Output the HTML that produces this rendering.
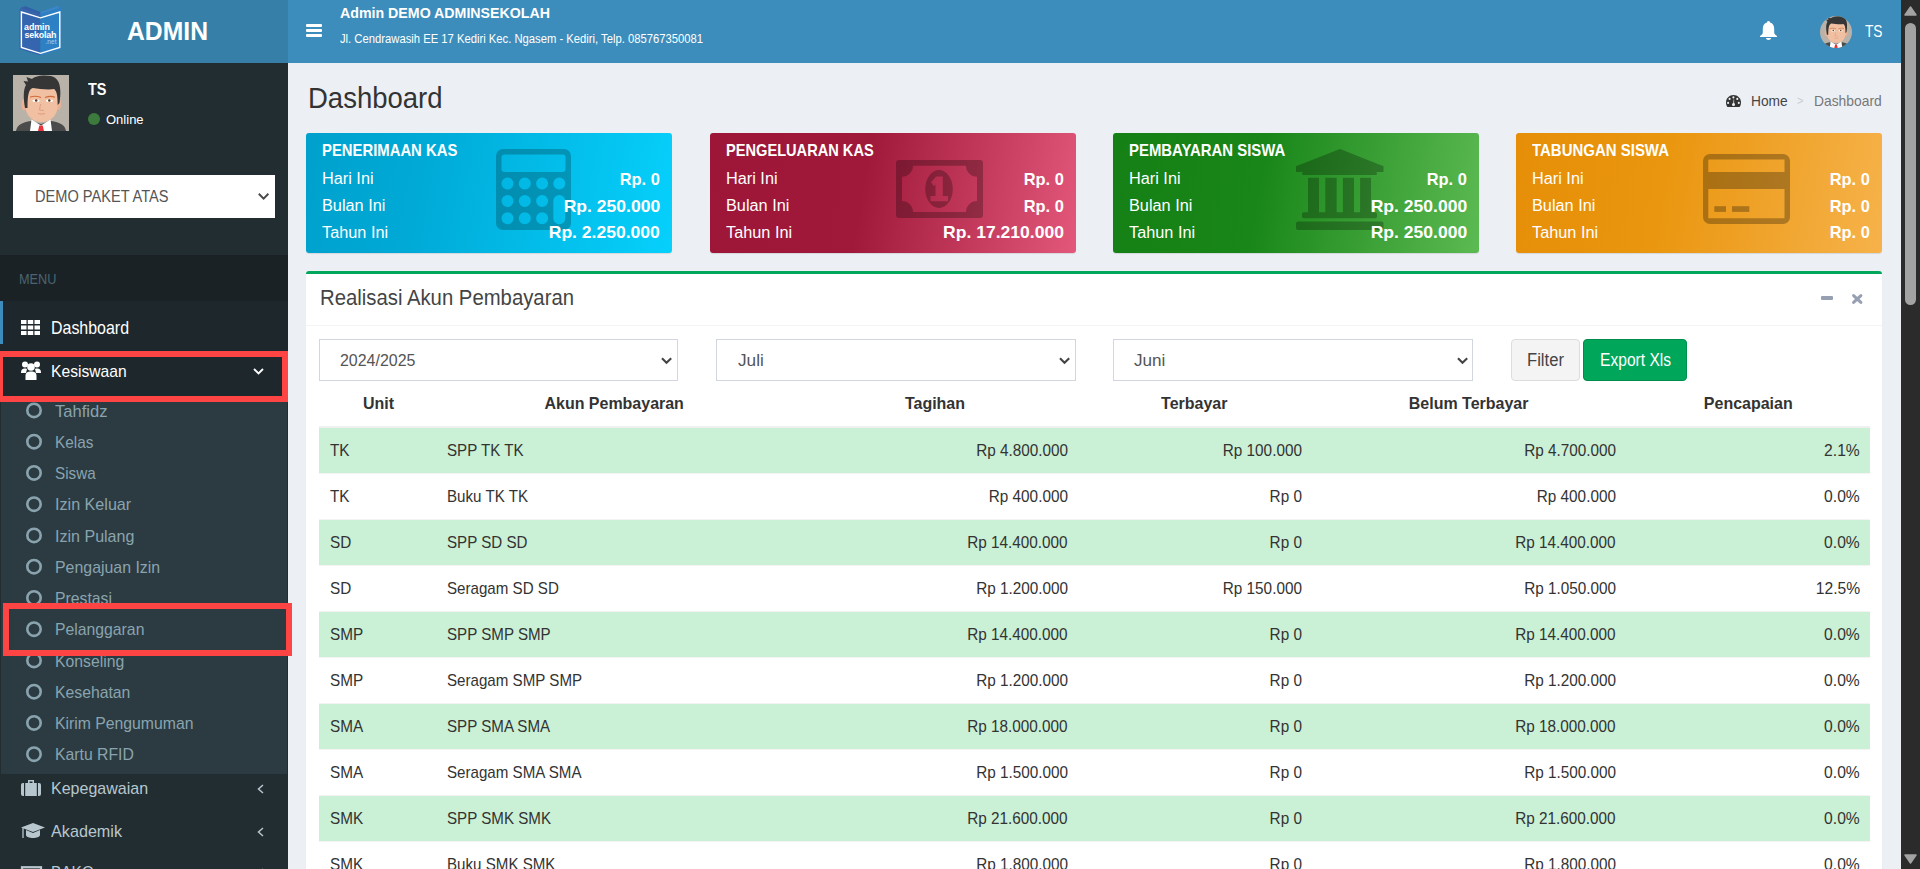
<!DOCTYPE html>
<html><head><meta charset="utf-8"><title>Dashboard</title>
<style>
html,body{margin:0;padding:0;width:1920px;height:869px;overflow:hidden;background:#ecf0f5;font-family:"Liberation Sans",sans-serif;}
.a{position:absolute;box-sizing:border-box;}
.t{position:absolute;white-space:nowrap;line-height:1;font-family:"Liberation Sans",sans-serif;}
svg{position:absolute;overflow:visible;}
</style></head><body>
<!-- header -->
<div class="a" style="left:0;top:0;width:288px;height:63px;background:#367fa9"></div>
<div class="a" style="left:288px;top:0;width:1613px;height:63px;background:#3c8dbc"></div>
<!-- logo -->
<svg style="left:19px;top:6px" width="44" height="51" viewBox="0 0 44 51">
  <path d="M3 0.5 L21.5 7.5 L21.5 10 L1 3 Z" fill="#3a62a8"/>
  <path d="M6 0 L21.5 6 L21.5 8 L4 2 Z" fill="#3060a8"/>
  <path d="M41.5 0.5 L21.5 7.5 L21.5 10 L42.5 3 Z" fill="#2f7dc2"/>
  <path d="M38.5 0 L21.5 6 L21.5 8 L40.5 2 Z" fill="#3a86c8"/>
  <path d="M0.5 3.1 L21.5 9.2 L21.5 49.5 L0.5 43 Z" fill="#3465ae"/>
  <path d="M42.7 3.1 L21.5 9.2 L21.5 49.5 L42.7 43 Z" fill="#2e80c4"/>
  <path d="M2.4 6 L21.5 11.8 L40.8 6 L40.8 41.5 L21.5 47.3 L2.4 41.5 Z" fill="none" stroke="#fff" stroke-width="1.4" stroke-linejoin="miter"/>
  <text x="5.1" y="23.7" font-family="Liberation Sans" font-weight="700" font-size="8.9" fill="#fff" letter-spacing="-0.1">admin</text>
  <text x="5.5" y="32.1" font-family="Liberation Sans" font-weight="700" font-size="8.9" fill="#fff" letter-spacing="-0.2">sekolah</text>
  <text x="26.5" y="38.2" font-family="Liberation Sans" font-size="6.6" fill="#9ad2f5">.net</text>
</svg>
<!-- hamburger -->
<div class="a" style="left:306px;top:24px;width:16px;height:3px;background:#fff;border-radius:1px"></div>
<div class="a" style="left:306px;top:29px;width:16px;height:3px;background:#fff;border-radius:1px"></div>
<div class="a" style="left:306px;top:34px;width:16px;height:3px;background:#fff;border-radius:1px"></div>
<!-- bell -->
<svg style="left:1760px;top:21px" width="17" height="19" viewBox="0 0 17 19">
  <path d="M8.5 0 C9.6 0 10 .8 10 1.6 C12.8 2.3 14.2 4.6 14.2 8 L14.2 11.5 C14.2 13 15.5 14 17 15 L17 16 L0 16 L0 15 C1.5 14 2.8 13 2.8 11.5 L2.8 8 C2.8 4.6 4.2 2.3 7 1.6 C7 .8 7.4 0 8.5 0 Z" fill="#fff"/>
  <path d="M6 17 L11 17 C11 18.3 9.9 19 8.5 19 C7.1 19 6 18.3 6 17 Z" fill="#fff"/>
</svg>
<!-- header avatar -->
<svg style="left:1820px;top:16px" width="32" height="32" viewBox="0 0 56 56">
  <defs><clipPath id="hc"><circle cx="28" cy="28" r="28"/></clipPath></defs>
  <g clip-path="url(#hc)"><use href="#face" width="56" height="56"/></g>
</svg>
<!-- sidebar -->
<div class="a" style="left:0;top:63px;width:288px;height:806px;background:#222d32"></div>
<!-- user avatar -->
<svg style="left:12.9px;top:74.9px" width="56" height="56" viewBox="0 0 56 56">
  <symbol id="face" viewBox="0 0 56 56">
  <rect width="56" height="56" fill="#b8b2a8"/>
  <path d="M3 56 C4 50 9 47.5 18 46 L28 49 L38 46 C47 47.5 52 50 53 56 Z" fill="#4b4b4b"/>
  <path d="M18.5 44.5 L28 50.5 L37.5 44.5 L39 56 L17 56 Z" fill="#fff"/>
  <path d="M26.3 50.5 L29.7 50.5 L31 56 L25 56 Z" fill="#e8343a"/>
  <ellipse cx="11" cy="29.5" rx="2.6" ry="6" fill="#eab294"/>
  <ellipse cx="45.5" cy="29" rx="2.6" ry="6" fill="#eab294"/>
  <path d="M12.5 22 C12.5 13 17 10 28.5 10 C40 10 44.6 13 44.6 22 L44.6 31 C44.6 41 37 47 28.5 47 C20 47 12.5 41 12.5 31 Z" fill="#f1c0a2"/>
  <path d="M12 33 C10 22 10.5 14 13 10 L10.5 6 L15 6.5 L13.5 2 L19 4 C22 1 30 -0.5 38 1 C46 3 49 10 46.5 28 L44.6 30 C44.8 22 44 16 41 14 C36 15 26 14 20 13 C16 14 14.5 19 14.5 33 Z" fill="#363636"/>
  <path d="M17 22.2 C20 21 24 21 28 22.5" fill="none" stroke="#d06a3a" stroke-width="1.1"/>
  <path d="M32 22.5 C36 21 39 21 42 22.2" fill="none" stroke="#d06a3a" stroke-width="1.1"/>
  <ellipse cx="23" cy="25.8" rx="3.6" ry="1.3" fill="#fff"/><circle cx="23.2" cy="25.5" r="1.3" fill="#5b3a22"/>
  <ellipse cx="36.5" cy="25.8" rx="3.6" ry="1.3" fill="#fff"/><circle cx="36.3" cy="25.5" r="1.3" fill="#5b3a22"/>
  <path d="M27.5 29 L26.5 35 L31 35.5" fill="none" stroke="#d9957a" stroke-width="0.8"/>
  <path d="M25 38.5 C27 39.2 30 39.2 32 38.5" fill="none" stroke="#d9957a" stroke-width="0.9"/>
  </symbol>
  <use href="#face" width="56" height="56"/>
</svg>
<div class="a" style="left:87.5px;top:113px;width:12px;height:12px;border-radius:50%;background:#3d7a3d"></div>
<!-- company select -->
<div class="a" style="left:13px;top:175px;width:262px;height:43px;background:#fff"></div>
<svg style="left:258.3px;top:193px" width="11.2" height="7.2" viewBox="0 0 11.2 7.2"><path d="M0.8 0.8 L5.6 5.6 L10.4 0.8" fill="none" stroke="#4a4a4a" stroke-width="2"/></svg>
<!-- MENU header -->
<div class="a" style="left:0;top:255px;width:288px;height:46px;background:#1a2226"></div>
<!-- Dashboard active -->
<div class="a" style="left:0;top:301px;width:288px;height:43px;background:#1e282c;border-left:3px solid #3c8dbc"></div>
<svg style="left:21px;top:319.5px" width="19" height="15" viewBox="0 0 19 15">
  <g fill="#fff">
  <rect x="0" y="0" width="5.5" height="4"/><rect x="6.75" y="0" width="5.5" height="4"/><rect x="13.5" y="0" width="5.5" height="4"/>
  <rect x="0" y="5.5" width="5.5" height="4"/><rect x="6.75" y="5.5" width="5.5" height="4"/><rect x="13.5" y="5.5" width="5.5" height="4"/>
  <rect x="0" y="11" width="5.5" height="4"/><rect x="6.75" y="11" width="5.5" height="4"/><rect x="13.5" y="11" width="5.5" height="4"/>
  </g>
</svg>
<!-- Kesiswaan -->
<div class="a" style="left:0;top:344px;width:288px;height:52px;background:#1e282c"></div>
<svg style="left:21px;top:361px" width="20" height="19" viewBox="0 0 20 19">
  <g fill="#fff">
  <circle cx="4" cy="3.5" r="3"/><circle cx="16" cy="3.5" r="3"/>
  <path d="M0 12 C0 8.5 1.5 7.5 4 7.5 C5.5 7.5 6 8 6 8 L5 12 Z"/>
  <path d="M20 12 C20 8.5 18.5 7.5 16 7.5 C14.5 7.5 14 8 14 8 L15 12 Z"/>
  <circle cx="10" cy="6" r="3.8"/>
  <path d="M4.5 19 L4.5 15 C4.5 11.5 6.5 10.5 10 10.5 C13.5 10.5 15.5 11.5 15.5 15 L15.5 19 Z"/>
  </g>
</svg>
<svg style="left:253px;top:368px" width="11" height="7" viewBox="0 0 11 7"><path d="M1 1 L5.5 5.5 L10 1" fill="none" stroke="#fff" stroke-width="1.8"/></svg>
<!-- treeview -->
<div class="a" style="left:1px;top:396px;width:286px;height:378px;background:#2c3b41"></div>
<svg style="left:0;top:0" width="60" height="869" viewBox="0 0 60 869">
  <g fill="none" stroke="#8aa4af" stroke-width="2.6">
  <circle cx="34" cy="410.4" r="6.7"/><circle cx="34" cy="441.65" r="6.7"/><circle cx="34" cy="472.9" r="6.7"/>
  <circle cx="34" cy="504.15" r="6.7"/><circle cx="34" cy="535.4" r="6.7"/><circle cx="34" cy="566.65" r="6.7"/>
  <circle cx="34" cy="597.9" r="6.7"/><circle cx="34" cy="629.15" r="6.7"/><circle cx="34" cy="660.4" r="6.7"/>
  <circle cx="34" cy="691.65" r="6.7"/><circle cx="34" cy="722.9" r="6.7"/><circle cx="34" cy="754.15" r="6.7"/>
  </g>
</svg>
<!-- Kepegawaian icon briefcase -->
<svg style="left:21px;top:779.5px" width="20" height="16" viewBox="0 0 20 16">
  <path d="M7 0 L13 0 L13 3 L11.5 3 L11.5 1.5 L8.5 1.5 L8.5 3 L7 3 Z" fill="#b8c7ce"/>
  <rect x="0" y="3" width="20" height="13" rx="2" fill="#b8c7ce"/>
  <rect x="3" y="3" width="1.2" height="13" fill="#222d32"/><rect x="15.8" y="3" width="1.2" height="13" fill="#222d32"/>
</svg>
<svg style="left:257px;top:784px" width="7" height="10" viewBox="0 0 7 10"><path d="M6 1 L1.5 5 L6 9" fill="none" stroke="#b8c7ce" stroke-width="1.5"/></svg>
<!-- Akademik icon -->
<svg style="left:21px;top:823px" width="24" height="16" viewBox="0 0 24 16">
  <path d="M12 0 L24 4.5 L12 9 L0 4.5 Z" fill="#b8c7ce"/>
  <path d="M5 7 L5 12 C5 14 8.5 15 12 15 C15.5 15 19 14 19 12 L19 7 L12 10 Z" fill="#b8c7ce"/>
  <path d="M2 5 L2 15" stroke="#b8c7ce" stroke-width="1.3"/>
</svg>
<svg style="left:257px;top:826.5px" width="7" height="10" viewBox="0 0 7 10"><path d="M6 1 L1.5 5 L6 9" fill="none" stroke="#b8c7ce" stroke-width="1.5"/></svg>
<svg style="left:21.5px;top:867px" width="19" height="10" viewBox="0 0 20 10"><rect x="0" y="0" width="20" height="10" fill="none" stroke="#b8c7ce" stroke-width="2.4"/></svg>
<svg style="left:257px;top:868px" width="7" height="10" viewBox="0 0 7 10"><path d="M6 1 L1.5 5 L6 9" fill="none" stroke="#b8c7ce" stroke-width="1.5"/></svg>
<!-- red highlight boxes -->
<div class="a" style="left:-3px;top:351px;width:291px;height:51px;border:6px solid #ff4444;z-index:5"></div>
<div class="a" style="left:3px;top:603px;width:289px;height:53px;border:6px solid #ff4444;z-index:5"></div>
<!-- breadcrumb gauge icon -->
<svg style="left:1726px;top:95px" width="15" height="12" viewBox="0 0 15 12">
  <path d="M7.5 0 C3.4 0 0 3.3 0 7.4 C0 9 .5 10.6 1.4 12 L13.6 12 C14.5 10.6 15 9 15 7.4 C15 3.3 11.6 0 7.5 0 Z" fill="#333"/>
  <g fill="#ecf0f5"><circle cx="7.4" cy="2.4" r="1.05"/><circle cx="3.6" cy="3.9" r="1.05"/><circle cx="11.3" cy="3.9" r="1.05"/><circle cx="2.1" cy="7.9" r="1.05"/><circle cx="12.8" cy="7.9" r="1.05"/>
  <path d="M7.1 9.3 L7.7 4.3 L8.1 4.3 L8.1 9.3 Z"/><circle cx="7.5" cy="9.6" r="1.5"/></g>
</svg>
<!-- info boxes -->
<div class="a" style="left:306px;top:133px;width:366px;height:120px;border-radius:3px;background:linear-gradient(100deg,#00a1cc 0%,#00a9d6 30%,#06d0fc 100%);box-shadow:0 1px 1px rgba(0,0,0,.1)"></div>
<div class="a" style="left:710px;top:133px;width:366px;height:120px;border-radius:3px;background:linear-gradient(100deg,#9d1637 0%,#a0193b 42%,#e3587a 100%);box-shadow:0 1px 1px rgba(0,0,0,.1)"></div>
<div class="a" style="left:1113px;top:133px;width:366px;height:120px;border-radius:3px;background:linear-gradient(100deg,#158015 0%,#198619 40%,#5cba52 100%);box-shadow:0 1px 1px rgba(0,0,0,.1)"></div>
<div class="a" style="left:1516px;top:133px;width:366px;height:120px;border-radius:3px;background:linear-gradient(100deg,#e68e08 0%,#ea960f 40%,#f6b24a 100%);box-shadow:0 1px 1px rgba(0,0,0,.1)"></div>
<!-- calculator -->
<svg style="left:495.5px;top:148.6px" width="75" height="81" viewBox="0 0 75 81">
  <path fill="rgba(0,0,0,0.22)" fill-rule="evenodd" d="M7 0 H68 A7 7 0 0 1 75 7 V74 A7 7 0 0 1 68 81 H7 A7 7 0 0 1 0 74 V7 A7 7 0 0 1 7 0 Z
   M8.5 5.4 H66.5 A3 3 0 0 1 69.5 8.4 V20 A3 3 0 0 1 66.5 23 H8.5 A3 3 0 0 1 5.5 20 V8.4 A3 3 0 0 1 8.5 5.4 Z
   M5.5 34.6 a6 6 0 1 0 12 0 a6 6 0 1 0 -12 0 Z M22.8 34.6 a6 6 0 1 0 12 0 a6 6 0 1 0 -12 0 Z M40.1 34.6 a6 6 0 1 0 12 0 a6 6 0 1 0 -12 0 Z M57.3 34.6 a6 6 0 1 0 12 0 a6 6 0 1 0 -12 0 Z
   M5.5 52 a6 6 0 1 0 12 0 a6 6 0 1 0 -12 0 Z M22.8 52 a6 6 0 1 0 12 0 a6 6 0 1 0 -12 0 Z M40.1 52 a6 6 0 1 0 12 0 a6 6 0 1 0 -12 0 Z
   M5.5 69.3 a6 6 0 1 0 12 0 a6 6 0 1 0 -12 0 Z M22.8 69.3 a6 6 0 1 0 12 0 a6 6 0 1 0 -12 0 Z M40.1 69.3 a6 6 0 1 0 12 0 a6 6 0 1 0 -12 0 Z
   M57.3 52 A6 6 0 0 1 69.3 52 V69.3 A6 6 0 0 1 57.3 69.3 Z"/>
</svg>
<!-- money -->
<svg style="left:896px;top:160px" width="87" height="58" viewBox="0 0 87 58">
  <path fill="rgba(0,0,0,0.26)" fill-rule="evenodd" d="M3 0 H84 A3 3 0 0 1 87 3 V55 A3 3 0 0 1 84 58 H3 A3 3 0 0 1 0 55 V3 A3 3 0 0 1 3 0 Z
   M17 5.8 H70 A11 11 0 0 0 81 16.8 V41 A11 11 0 0 0 70 52 H17 A11 11 0 0 0 6 41 V16.8 A11 11 0 0 0 17 5.8 Z"/>
  <path fill="rgba(0,0,0,0.26)" fill-rule="evenodd" d="M29.2 29 A13.8 18.9 0 1 0 56.8 29 A13.8 18.9 0 1 0 29.2 29 Z
   M40.2 16.5 L46.8 16.5 L46.8 36 L52 36 L52 41.2 L34.5 41.2 L34.5 36 L39.5 36 L39.5 24.5 L38 26.2 L35 22.2 Z"/>
</svg>
<!-- bank -->
<svg style="left:1296px;top:148.6px" width="88" height="81" viewBox="0 0 88 81">
  <g fill="rgba(0,0,0,0.26)">
  <path d="M44 0 L87.5 17.3 V23 H0 V17.3 Z"/>
  <rect x="6" y="23" width="75" height="3" rx="1.5"/>
  <rect x="12" y="28.8" width="11" height="34.5"/><rect x="29.3" y="28.8" width="11.3" height="34.5"/>
  <rect x="46.9" y="28.8" width="11.1" height="34.5"/><rect x="64.1" y="28.8" width="10.9" height="34.5"/>
  <rect x="6" y="63.3" width="75" height="6" rx="2"/>
  <rect x="0" y="72.4" width="87.5" height="8.5" rx="2"/>
  </g>
</svg>
<!-- card -->
<svg style="left:1702.7px;top:154px" width="87" height="70" viewBox="0 0 87 70">
  <g fill="rgba(0,0,0,0.28)">
  <path fill-rule="evenodd" d="M7 0 H80 A7 7 0 0 1 87 7 V63 A7 7 0 0 1 80 70 H7 A7 7 0 0 1 0 63 V7 A7 7 0 0 1 7 0 Z M5.3 5.5 V18 H81.5 V5.5 Z M5.3 34.9 V64.3 H81.5 V34.9 Z"/>
  <rect x="11.3" y="52.2" width="11.7" height="5.7"/><rect x="29" y="52.2" width="17.3" height="5.7"/>
  </g>
</svg>
<!-- main box -->
<div class="a" style="left:306px;top:271px;width:1576px;height:640px;background:#fff;border-top:3px solid #00a65a;border-radius:3px;box-shadow:0 1px 1px rgba(0,0,0,.1)"></div>
<div class="a" style="left:306px;top:325px;width:1576px;height:1px;background:#f4f4f4"></div>
<div class="a" style="left:1821px;top:296.2px;width:12px;height:3.6px;background:#97a0b3;border-radius:1px"></div>
<svg style="left:1851.5px;top:294px" width="10.5" height="10" viewBox="0 0 10.5 10"><path d="M1.6 1.6 L8.9 8.4 M8.9 1.6 L1.6 8.4" stroke="#97a0b3" stroke-width="3" stroke-linecap="round"/></svg>
<!-- selects -->
<div class="a" style="left:319px;top:339px;width:359px;height:42px;border:1px solid #d2d6de;background:#fff"></div>
<div class="a" style="left:716px;top:339px;width:360px;height:42px;border:1px solid #d2d6de;background:#fff"></div>
<div class="a" style="left:1113px;top:339px;width:360px;height:42px;border:1px solid #d2d6de;background:#fff"></div>
<svg style="left:661px;top:357px" width="11" height="8" viewBox="0 0 11 8"><path d="M1 1.2 L5.5 5.8 L10.2 1.2" fill="none" stroke="#444" stroke-width="2.1"/></svg>
<svg style="left:1059px;top:357px" width="11" height="8" viewBox="0 0 11 8"><path d="M1 1.2 L5.5 5.8 L10.2 1.2" fill="none" stroke="#444" stroke-width="2.1"/></svg>
<svg style="left:1456.5px;top:357px" width="11" height="8" viewBox="0 0 11 8"><path d="M1 1.2 L5.5 5.8 L10.2 1.2" fill="none" stroke="#444" stroke-width="2.1"/></svg>
<!-- buttons -->
<div class="a" style="left:1510.5px;top:339px;width:69px;height:42px;border:1px solid #ddd;background:#f4f4f4;border-radius:4px"></div>
<div class="a" style="left:1583px;top:339px;width:104px;height:42px;border:1px solid #008d4c;background:#00a65a;border-radius:4px"></div>
<!-- table -->
<div class="a" style="left:319px;top:426px;width:1551px;height:2px;background:#f0f0f0"></div>
<div class="a" style="left:319px;top:473px;width:1551px;height:1px;background:#f4f4f4"></div>
<div class="a" style="left:319px;top:519px;width:1551px;height:1px;background:#f4f4f4"></div>
<div class="a" style="left:319px;top:565px;width:1551px;height:1px;background:#f4f4f4"></div>
<div class="a" style="left:319px;top:611px;width:1551px;height:1px;background:#f4f4f4"></div>
<div class="a" style="left:319px;top:657px;width:1551px;height:1px;background:#f4f4f4"></div>
<div class="a" style="left:319px;top:703px;width:1551px;height:1px;background:#f4f4f4"></div>
<div class="a" style="left:319px;top:749px;width:1551px;height:1px;background:#f4f4f4"></div>
<div class="a" style="left:319px;top:795px;width:1551px;height:1px;background:#f4f4f4"></div>
<div class="a" style="left:319px;top:841px;width:1551px;height:1px;background:#f4f4f4"></div>
<div class="a" style="left:319px;top:428px;width:1551px;height:45px;background:#caf0d5"></div>
<div class="a" style="left:319px;top:520px;width:1551px;height:45px;background:#caf0d5"></div>
<div class="a" style="left:319px;top:612px;width:1551px;height:45px;background:#caf0d5"></div>
<div class="a" style="left:319px;top:704px;width:1551px;height:45px;background:#caf0d5"></div>
<div class="a" style="left:319px;top:796px;width:1551px;height:45px;background:#caf0d5"></div>
<!-- scrollbar -->
<div class="a" style="left:1901px;top:0;width:19px;height:869px;background:#2b2b2b"></div>
<svg style="left:1904px;top:5px" width="13" height="11" viewBox="0 0 13 11"><path d="M6.5 2 L12 10 L1 10 Z" fill="#a3a3a3" stroke="#a3a3a3" stroke-width="1.5" stroke-linejoin="round"/></svg>
<div class="a" style="left:1905px;top:23px;width:11px;height:282px;background:#a3a3a3;border-radius:5.5px"></div>
<svg style="left:1904px;top:854px" width="13" height="10" viewBox="0 0 13 10"><path d="M1 1 L12 1 L6.5 9 Z" fill="#a3a3a3" stroke="#a3a3a3" stroke-width="1.5" stroke-linejoin="round"/></svg>

<div class="t" style="top:17.97px;font-size:26px;font-weight:700;color:#fff;left:127.30px;transform-origin:0 0;transform:scaleX(0.9505);">ADMIN</div>
<div class="t" style="top:5.27px;font-size:15px;font-weight:700;color:#fff;left:340.00px;transform-origin:0 0;transform:scaleX(0.9461);">Admin DEMO ADMINSEKOLAH</div>
<div class="t" style="top:32.48px;font-size:13px;font-weight:400;color:#fff;left:340.00px;transform-origin:0 0;transform:scaleX(0.8651);">Jl. Cendrawasih EE 17 Kediri Kec. Ngasem - Kediri, Telp. 085767350081</div>
<div class="t" style="top:23.16px;font-size:17px;font-weight:400;color:#fff;left:1864.80px;transform-origin:0 0;transform:scaleX(0.8052);">TS</div>
<div class="t" style="top:81.36px;font-size:17px;font-weight:700;color:#fff;left:87.50px;transform-origin:0 0;transform:scaleX(0.8512);">TS</div>
<div class="t" style="top:113.09px;font-size:13.6px;font-weight:400;color:#fff;left:106.00px;transform-origin:0 0;transform:scaleX(0.9568);">Online</div>
<div class="t" style="top:188.30px;font-size:17.4px;font-weight:400;color:#555;left:34.50px;transform-origin:0 0;transform:scaleX(0.8389);">DEMO PAKET ATAS</div>
<div class="t" style="top:271.75px;font-size:14.5px;font-weight:400;color:#4b646f;left:19.00px;transform-origin:0 0;transform:scaleX(0.8758);">MENU</div>
<div class="t" style="top:319.74px;font-size:17.8px;font-weight:400;color:#fff;left:51.00px;transform-origin:0 0;transform:scaleX(0.8966);">Dashboard</div>
<div class="t" style="top:362.87px;font-size:17px;font-weight:400;color:#fff;left:51.00px;transform-origin:0 0;transform:scaleX(0.9200);">Kesiswaan</div>
<div class="t" style="top:403.63px;font-size:16.6px;font-weight:400;color:#8aa4af;left:55.30px;transform-origin:0 0;transform:scaleX(0.9966);">Tahfidz</div>
<div class="t" style="top:434.88px;font-size:16.6px;font-weight:400;color:#8aa4af;left:55.30px;transform-origin:0 0;transform:scaleX(0.9250);">Kelas</div>
<div class="t" style="top:466.13px;font-size:16.6px;font-weight:400;color:#8aa4af;left:55.30px;transform-origin:0 0;transform:scaleX(0.9172);">Siswa</div>
<div class="t" style="top:497.38px;font-size:16.6px;font-weight:400;color:#8aa4af;left:55.30px;transform-origin:0 0;transform:scaleX(0.9719);">Izin Keluar</div>
<div class="t" style="top:528.63px;font-size:16.6px;font-weight:400;color:#8aa4af;left:55.30px;transform-origin:0 0;transform:scaleX(0.9670);">Izin Pulang</div>
<div class="t" style="top:559.88px;font-size:16.6px;font-weight:400;color:#8aa4af;left:55.30px;transform-origin:0 0;transform:scaleX(0.9581);">Pengajuan Izin</div>
<div class="t" style="top:591.13px;font-size:16.6px;font-weight:400;color:#8aa4af;left:55.30px;transform-origin:0 0;transform:scaleX(0.9500);">Prestasi</div>
<div class="t" style="top:622.38px;font-size:16.6px;font-weight:400;color:#8aa4af;left:55.30px;transform-origin:0 0;transform:scaleX(0.9500);">Pelanggaran</div>
<div class="t" style="top:653.63px;font-size:16.6px;font-weight:400;color:#8aa4af;left:55.30px;transform-origin:0 0;transform:scaleX(0.9500);">Konseling</div>
<div class="t" style="top:684.88px;font-size:16.6px;font-weight:400;color:#8aa4af;left:55.30px;transform-origin:0 0;transform:scaleX(0.9500);">Kesehatan</div>
<div class="t" style="top:716.13px;font-size:16.6px;font-weight:400;color:#8aa4af;left:55.30px;transform-origin:0 0;transform:scaleX(0.9500);">Kirim Pengumuman</div>
<div class="t" style="top:747.38px;font-size:16.6px;font-weight:400;color:#8aa4af;left:55.30px;transform-origin:0 0;transform:scaleX(0.9500);">Kartu RFID</div>
<div class="t" style="top:781.33px;font-size:16.6px;font-weight:400;color:#b8c7ce;left:51.20px;transform-origin:0 0;transform:scaleX(0.9650);">Kepegawaian</div>
<div class="t" style="top:823.53px;font-size:16.6px;font-weight:400;color:#b8c7ce;left:51.20px;transform-origin:0 0;transform:scaleX(0.9750);">Akademik</div>
<div class="t" style="top:865.43px;font-size:16.6px;font-weight:400;color:#b8c7ce;left:51.40px;transform-origin:0 0;transform:scaleX(0.9300);">BAKQ</div>
<div class="t" style="top:83.50px;font-size:29px;font-weight:400;color:#333;left:307.60px;transform-origin:0 0;transform:scaleX(0.9480);">Dashboard</div>
<div class="t" style="top:93.55px;font-size:14.5px;font-weight:400;color:#444;left:1750.80px;transform-origin:0 0;transform:scaleX(0.9486);">Home</div>
<div class="t" style="top:94.48px;font-size:13px;font-weight:400;color:#ccc;left:1796.70px;transform-origin:0 0;transform:scaleX(0.8500);">&gt;</div>
<div class="t" style="top:93.55px;font-size:14.5px;font-weight:400;color:#777;left:1814.00px;transform-origin:0 0;transform:scaleX(0.9544);">Dashboard</div>
<div class="t" style="top:143.41px;font-size:16.7px;font-weight:700;color:#fff;left:322.00px;transform-origin:0 0;transform:scaleX(0.8898);">PENERIMAAN KAS</div>
<div class="t" style="top:169.72px;font-size:17.3px;font-weight:400;color:#fff;left:322.00px;transform-origin:0 0;transform:scaleX(0.9420);">Hari Ini</div>
<div class="t" style="top:196.72px;font-size:17.3px;font-weight:400;color:#fff;left:322.00px;transform-origin:0 0;transform:scaleX(0.9420);">Bulan Ini</div>
<div class="t" style="top:223.72px;font-size:17.3px;font-weight:400;color:#fff;left:322.00px;transform-origin:0 0;transform:scaleX(0.9420);">Tahun Ini</div>
<div class="t" style="top:170.96px;font-size:16.4px;font-weight:700;color:#fff;left:619.72px;transform-origin:100% 0;">Rp. 0</div>
<div class="t" style="top:197.71px;font-size:16.4px;font-weight:700;color:#fff;left:569.58px;transform-origin:100% 0;transform:scaleX(1.0700);">Rp. 250.000</div>
<div class="t" style="top:224.46px;font-size:16.4px;font-weight:700;color:#fff;left:555.92px;transform-origin:100% 0;transform:scaleX(1.0700);">Rp. 2.250.000</div>
<div class="t" style="top:143.41px;font-size:16.7px;font-weight:700;color:#fff;left:726.00px;transform-origin:0 0;transform:scaleX(0.8753);">PENGELUARAN KAS</div>
<div class="t" style="top:169.72px;font-size:17.3px;font-weight:400;color:#fff;left:726.00px;transform-origin:0 0;transform:scaleX(0.9420);">Hari Ini</div>
<div class="t" style="top:196.72px;font-size:17.3px;font-weight:400;color:#fff;left:726.00px;transform-origin:0 0;transform:scaleX(0.9420);">Bulan Ini</div>
<div class="t" style="top:223.72px;font-size:17.3px;font-weight:400;color:#fff;left:726.00px;transform-origin:0 0;transform:scaleX(0.9420);">Tahun Ini</div>
<div class="t" style="top:170.96px;font-size:16.4px;font-weight:700;color:#fff;left:1023.72px;transform-origin:100% 0;">Rp. 0</div>
<div class="t" style="top:197.71px;font-size:16.4px;font-weight:700;color:#fff;left:1023.72px;transform-origin:100% 0;">Rp. 0</div>
<div class="t" style="top:224.46px;font-size:16.4px;font-weight:700;color:#fff;left:950.80px;transform-origin:100% 0;transform:scaleX(1.0700);">Rp. 17.210.000</div>
<div class="t" style="top:143.41px;font-size:16.7px;font-weight:700;color:#fff;left:1129.00px;transform-origin:0 0;transform:scaleX(0.8934);">PEMBAYARAN SISWA</div>
<div class="t" style="top:169.72px;font-size:17.3px;font-weight:400;color:#fff;left:1129.00px;transform-origin:0 0;transform:scaleX(0.9420);">Hari Ini</div>
<div class="t" style="top:196.72px;font-size:17.3px;font-weight:400;color:#fff;left:1129.00px;transform-origin:0 0;transform:scaleX(0.9420);">Bulan Ini</div>
<div class="t" style="top:223.72px;font-size:17.3px;font-weight:400;color:#fff;left:1129.00px;transform-origin:0 0;transform:scaleX(0.9420);">Tahun Ini</div>
<div class="t" style="top:170.96px;font-size:16.4px;font-weight:700;color:#fff;left:1426.72px;transform-origin:100% 0;">Rp. 0</div>
<div class="t" style="top:197.71px;font-size:16.4px;font-weight:700;color:#fff;left:1376.58px;transform-origin:100% 0;transform:scaleX(1.0700);">Rp. 250.000</div>
<div class="t" style="top:224.46px;font-size:16.4px;font-weight:700;color:#fff;left:1376.58px;transform-origin:100% 0;transform:scaleX(1.0700);">Rp. 250.000</div>
<div class="t" style="top:143.41px;font-size:16.7px;font-weight:700;color:#fff;left:1532.00px;transform-origin:0 0;transform:scaleX(0.8974);">TABUNGAN SISWA</div>
<div class="t" style="top:169.72px;font-size:17.3px;font-weight:400;color:#fff;left:1532.00px;transform-origin:0 0;transform:scaleX(0.9420);">Hari Ini</div>
<div class="t" style="top:196.72px;font-size:17.3px;font-weight:400;color:#fff;left:1532.00px;transform-origin:0 0;transform:scaleX(0.9420);">Bulan Ini</div>
<div class="t" style="top:223.72px;font-size:17.3px;font-weight:400;color:#fff;left:1532.00px;transform-origin:0 0;transform:scaleX(0.9420);">Tahun Ini</div>
<div class="t" style="top:170.96px;font-size:16.4px;font-weight:700;color:#fff;left:1829.72px;transform-origin:100% 0;">Rp. 0</div>
<div class="t" style="top:197.71px;font-size:16.4px;font-weight:700;color:#fff;left:1829.72px;transform-origin:100% 0;">Rp. 0</div>
<div class="t" style="top:224.46px;font-size:16.4px;font-weight:700;color:#fff;left:1829.72px;transform-origin:100% 0;">Rp. 0</div>
<div class="t" style="top:287.30px;font-size:22.6px;font-weight:400;color:#444;left:320.00px;transform-origin:0 0;transform:scaleX(0.8989);">Realisasi Akun Pembayaran</div>
<div class="t" style="top:352.17px;font-size:17px;font-weight:400;color:#555;left:340.00px;transform-origin:0 0;transform:scaleX(0.9381);">2024/2025</div>
<div class="t" style="top:352.17px;font-size:17px;font-weight:400;color:#555;left:737.50px;transform-origin:0 0;transform:scaleX(1.0111);">Juli</div>
<div class="t" style="top:352.17px;font-size:17px;font-weight:400;color:#555;left:1134.00px;transform-origin:0 0;transform:scaleX(1.0068);">Juni</div>
<div class="t" style="top:351.59px;font-size:17.5px;font-weight:400;color:#444;left:1527.20px;transform-origin:0 0;transform:scaleX(0.9514);">Filter</div>
<div class="t" style="top:351.59px;font-size:17.5px;font-weight:400;color:#fff;left:1600.30px;transform-origin:0 0;transform:scaleX(0.8915);">Export Xls</div>
<div class="t" style="top:394.67px;font-size:17px;font-weight:700;color:#333;left:361.78px;transform-origin:50% 0;transform:scaleX(0.9400);">Unit</div>
<div class="t" style="top:394.67px;font-size:17px;font-weight:700;color:#333;left:540.03px;transform-origin:50% 0;transform:scaleX(0.9400);">Akun Pembayaran</div>
<div class="t" style="top:394.67px;font-size:17px;font-weight:700;color:#333;left:903.24px;transform-origin:50% 0;transform:scaleX(0.9400);">Tagihan</div>
<div class="t" style="top:394.67px;font-size:17px;font-weight:700;color:#333;left:1159.22px;transform-origin:50% 0;transform:scaleX(0.9400);">Terbayar</div>
<div class="t" style="top:394.67px;font-size:17px;font-weight:700;color:#333;left:1405.38px;transform-origin:50% 0;transform:scaleX(0.9400);">Belum Terbayar</div>
<div class="t" style="top:394.67px;font-size:17px;font-weight:700;color:#333;left:1700.95px;transform-origin:50% 0;transform:scaleX(0.9400);">Pencapaian</div>
<div class="t" style="top:441.56px;font-size:17px;font-weight:400;color:#333;left:329.70px;transform-origin:0 0;transform:scaleX(0.9000);">TK</div>
<div class="t" style="top:441.56px;font-size:17px;font-weight:400;color:#333;left:447.00px;transform-origin:0 0;transform:scaleX(0.8900);">SPP TK TK</div>
<div class="t" style="top:441.56px;font-size:17px;font-weight:400;color:#333;left:965.91px;transform-origin:100% 0;transform:scaleX(0.9000);">Rp 4.800.000</div>
<div class="t" style="top:441.56px;font-size:17px;font-weight:400;color:#333;left:1213.59px;transform-origin:100% 0;transform:scaleX(0.9000);">Rp 100.000</div>
<div class="t" style="top:441.56px;font-size:17px;font-weight:400;color:#333;left:1513.91px;transform-origin:100% 0;transform:scaleX(0.9000);">Rp 4.700.000</div>
<div class="t" style="top:441.56px;font-size:17px;font-weight:400;color:#333;left:1820.95px;transform-origin:100% 0;transform:scaleX(0.9200);">2.1%</div>
<div class="t" style="top:487.56px;font-size:17px;font-weight:400;color:#333;left:329.70px;transform-origin:0 0;transform:scaleX(0.9000);">TK</div>
<div class="t" style="top:487.56px;font-size:17px;font-weight:400;color:#333;left:447.00px;transform-origin:0 0;transform:scaleX(0.8900);">Buku TK TK</div>
<div class="t" style="top:487.56px;font-size:17px;font-weight:400;color:#333;left:980.09px;transform-origin:100% 0;transform:scaleX(0.9000);">Rp 400.000</div>
<div class="t" style="top:487.56px;font-size:17px;font-weight:400;color:#333;left:1265.58px;transform-origin:100% 0;transform:scaleX(0.9000);">Rp 0</div>
<div class="t" style="top:487.56px;font-size:17px;font-weight:400;color:#333;left:1528.09px;transform-origin:100% 0;transform:scaleX(0.9000);">Rp 400.000</div>
<div class="t" style="top:487.56px;font-size:17px;font-weight:400;color:#333;left:1820.95px;transform-origin:100% 0;transform:scaleX(0.9200);">0.0%</div>
<div class="t" style="top:533.57px;font-size:17px;font-weight:400;color:#333;left:329.70px;transform-origin:0 0;transform:scaleX(0.9000);">SD</div>
<div class="t" style="top:533.57px;font-size:17px;font-weight:400;color:#333;left:447.00px;transform-origin:0 0;transform:scaleX(0.8900);">SPP SD SD</div>
<div class="t" style="top:533.57px;font-size:17px;font-weight:400;color:#333;left:956.45px;transform-origin:100% 0;transform:scaleX(0.9000);">Rp 14.400.000</div>
<div class="t" style="top:533.57px;font-size:17px;font-weight:400;color:#333;left:1265.58px;transform-origin:100% 0;transform:scaleX(0.9000);">Rp 0</div>
<div class="t" style="top:533.57px;font-size:17px;font-weight:400;color:#333;left:1504.45px;transform-origin:100% 0;transform:scaleX(0.9000);">Rp 14.400.000</div>
<div class="t" style="top:533.57px;font-size:17px;font-weight:400;color:#333;left:1820.95px;transform-origin:100% 0;transform:scaleX(0.9200);">0.0%</div>
<div class="t" style="top:579.57px;font-size:17px;font-weight:400;color:#333;left:329.70px;transform-origin:0 0;transform:scaleX(0.9000);">SD</div>
<div class="t" style="top:579.57px;font-size:17px;font-weight:400;color:#333;left:447.00px;transform-origin:0 0;transform:scaleX(0.8900);">Seragam SD SD</div>
<div class="t" style="top:579.57px;font-size:17px;font-weight:400;color:#333;left:965.91px;transform-origin:100% 0;transform:scaleX(0.9000);">Rp 1.200.000</div>
<div class="t" style="top:579.57px;font-size:17px;font-weight:400;color:#333;left:1213.59px;transform-origin:100% 0;transform:scaleX(0.9000);">Rp 150.000</div>
<div class="t" style="top:579.57px;font-size:17px;font-weight:400;color:#333;left:1513.91px;transform-origin:100% 0;transform:scaleX(0.9000);">Rp 1.050.000</div>
<div class="t" style="top:579.57px;font-size:17px;font-weight:400;color:#333;left:1811.50px;transform-origin:100% 0;transform:scaleX(0.9200);">12.5%</div>
<div class="t" style="top:625.57px;font-size:17px;font-weight:400;color:#333;left:329.70px;transform-origin:0 0;transform:scaleX(0.9000);">SMP</div>
<div class="t" style="top:625.57px;font-size:17px;font-weight:400;color:#333;left:447.00px;transform-origin:0 0;transform:scaleX(0.8900);">SPP SMP SMP</div>
<div class="t" style="top:625.57px;font-size:17px;font-weight:400;color:#333;left:956.45px;transform-origin:100% 0;transform:scaleX(0.9000);">Rp 14.400.000</div>
<div class="t" style="top:625.57px;font-size:17px;font-weight:400;color:#333;left:1265.58px;transform-origin:100% 0;transform:scaleX(0.9000);">Rp 0</div>
<div class="t" style="top:625.57px;font-size:17px;font-weight:400;color:#333;left:1504.45px;transform-origin:100% 0;transform:scaleX(0.9000);">Rp 14.400.000</div>
<div class="t" style="top:625.57px;font-size:17px;font-weight:400;color:#333;left:1820.95px;transform-origin:100% 0;transform:scaleX(0.9200);">0.0%</div>
<div class="t" style="top:671.57px;font-size:17px;font-weight:400;color:#333;left:329.70px;transform-origin:0 0;transform:scaleX(0.9000);">SMP</div>
<div class="t" style="top:671.57px;font-size:17px;font-weight:400;color:#333;left:447.00px;transform-origin:0 0;transform:scaleX(0.8900);">Seragam SMP SMP</div>
<div class="t" style="top:671.57px;font-size:17px;font-weight:400;color:#333;left:965.91px;transform-origin:100% 0;transform:scaleX(0.9000);">Rp 1.200.000</div>
<div class="t" style="top:671.57px;font-size:17px;font-weight:400;color:#333;left:1265.58px;transform-origin:100% 0;transform:scaleX(0.9000);">Rp 0</div>
<div class="t" style="top:671.57px;font-size:17px;font-weight:400;color:#333;left:1513.91px;transform-origin:100% 0;transform:scaleX(0.9000);">Rp 1.200.000</div>
<div class="t" style="top:671.57px;font-size:17px;font-weight:400;color:#333;left:1820.95px;transform-origin:100% 0;transform:scaleX(0.9200);">0.0%</div>
<div class="t" style="top:717.57px;font-size:17px;font-weight:400;color:#333;left:329.70px;transform-origin:0 0;transform:scaleX(0.9000);">SMA</div>
<div class="t" style="top:717.57px;font-size:17px;font-weight:400;color:#333;left:447.00px;transform-origin:0 0;transform:scaleX(0.8900);">SPP SMA SMA</div>
<div class="t" style="top:717.57px;font-size:17px;font-weight:400;color:#333;left:956.45px;transform-origin:100% 0;transform:scaleX(0.9000);">Rp 18.000.000</div>
<div class="t" style="top:717.57px;font-size:17px;font-weight:400;color:#333;left:1265.58px;transform-origin:100% 0;transform:scaleX(0.9000);">Rp 0</div>
<div class="t" style="top:717.57px;font-size:17px;font-weight:400;color:#333;left:1504.45px;transform-origin:100% 0;transform:scaleX(0.9000);">Rp 18.000.000</div>
<div class="t" style="top:717.57px;font-size:17px;font-weight:400;color:#333;left:1820.95px;transform-origin:100% 0;transform:scaleX(0.9200);">0.0%</div>
<div class="t" style="top:763.57px;font-size:17px;font-weight:400;color:#333;left:329.70px;transform-origin:0 0;transform:scaleX(0.9000);">SMA</div>
<div class="t" style="top:763.57px;font-size:17px;font-weight:400;color:#333;left:447.00px;transform-origin:0 0;transform:scaleX(0.8900);">Seragam SMA SMA</div>
<div class="t" style="top:763.57px;font-size:17px;font-weight:400;color:#333;left:965.91px;transform-origin:100% 0;transform:scaleX(0.9000);">Rp 1.500.000</div>
<div class="t" style="top:763.57px;font-size:17px;font-weight:400;color:#333;left:1265.58px;transform-origin:100% 0;transform:scaleX(0.9000);">Rp 0</div>
<div class="t" style="top:763.57px;font-size:17px;font-weight:400;color:#333;left:1513.91px;transform-origin:100% 0;transform:scaleX(0.9000);">Rp 1.500.000</div>
<div class="t" style="top:763.57px;font-size:17px;font-weight:400;color:#333;left:1820.95px;transform-origin:100% 0;transform:scaleX(0.9200);">0.0%</div>
<div class="t" style="top:809.57px;font-size:17px;font-weight:400;color:#333;left:329.70px;transform-origin:0 0;transform:scaleX(0.9000);">SMK</div>
<div class="t" style="top:809.57px;font-size:17px;font-weight:400;color:#333;left:447.00px;transform-origin:0 0;transform:scaleX(0.8900);">SPP SMK SMK</div>
<div class="t" style="top:809.57px;font-size:17px;font-weight:400;color:#333;left:956.45px;transform-origin:100% 0;transform:scaleX(0.9000);">Rp 21.600.000</div>
<div class="t" style="top:809.57px;font-size:17px;font-weight:400;color:#333;left:1265.58px;transform-origin:100% 0;transform:scaleX(0.9000);">Rp 0</div>
<div class="t" style="top:809.57px;font-size:17px;font-weight:400;color:#333;left:1504.45px;transform-origin:100% 0;transform:scaleX(0.9000);">Rp 21.600.000</div>
<div class="t" style="top:809.57px;font-size:17px;font-weight:400;color:#333;left:1820.95px;transform-origin:100% 0;transform:scaleX(0.9200);">0.0%</div>
<div class="t" style="top:855.57px;font-size:17px;font-weight:400;color:#333;left:329.70px;transform-origin:0 0;transform:scaleX(0.9000);">SMK</div>
<div class="t" style="top:855.57px;font-size:17px;font-weight:400;color:#333;left:447.00px;transform-origin:0 0;transform:scaleX(0.8900);">Buku SMK SMK</div>
<div class="t" style="top:855.57px;font-size:17px;font-weight:400;color:#333;left:965.91px;transform-origin:100% 0;transform:scaleX(0.9000);">Rp 1.800.000</div>
<div class="t" style="top:855.57px;font-size:17px;font-weight:400;color:#333;left:1265.58px;transform-origin:100% 0;transform:scaleX(0.9000);">Rp 0</div>
<div class="t" style="top:855.57px;font-size:17px;font-weight:400;color:#333;left:1513.91px;transform-origin:100% 0;transform:scaleX(0.9000);">Rp 1.800.000</div>
<div class="t" style="top:855.57px;font-size:17px;font-weight:400;color:#333;left:1820.95px;transform-origin:100% 0;transform:scaleX(0.9200);">0.0%</div>
</body></html>
